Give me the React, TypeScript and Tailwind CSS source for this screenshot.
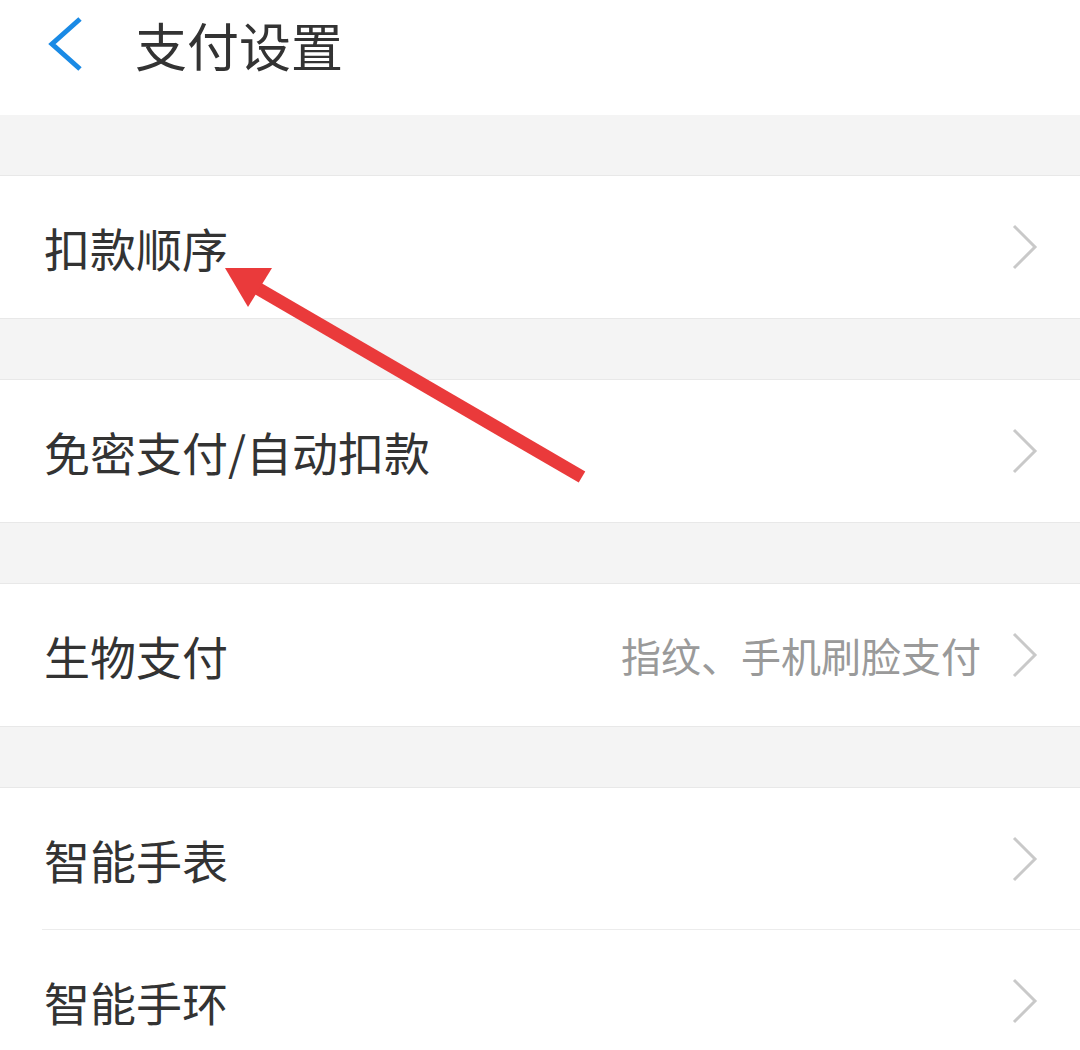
import React from "react";

const font = { fontFamily: '"Noto Sans CJK SC", "Noto Sans", sans-serif' };

function Chevron() {
  return (
    <svg width="28" height="46" viewBox="0 0 28 46" className="shrink-0">
      <path d="M3 2 L24 23 L3 44" fill="none" stroke="#c9c9c9" strokeWidth="3" />
    </svg>
  );
}

function Row({ label, hint, divider }: { label: string; hint?: string; divider?: boolean }) {
  return (
    <div className="relative flex items-center h-[142px] bg-white pl-[44px] pr-[41px]">
      <span className="flex-1 text-[46px] text-[#333333] leading-none">{label}</span>
      {hint && <span className="text-[40px] text-[#9a9a9a] leading-none mr-[30px]">{hint}</span>}
      <Chevron />
      {divider && <div className="absolute left-[42px] right-0 bottom-0 h-px bg-[#ececec]" />}
    </div>
  );
}

function Band({ first }: { first?: boolean }) {
  return (
    <div
      className={
        first
          ? "h-[61px] bg-[#f4f4f4] border-b border-[#e8e8e8]"
          : "h-[62px] bg-[#f4f4f4] border-y border-[#e8e8e8]"
      }
    />
  );
}

export default function App() {
  return (
    <div className="relative w-[1080px] h-[1050px] overflow-hidden bg-white" style={font}>
      <div className="h-[115px] flex items-start pt-[16px]">
        <svg width="40" height="56" viewBox="0 0 40 56" className="ml-[45px] mt-[0px]">
          <path d="M35 3 L7 28 L35 53" fill="none" stroke="#1a8ae5" strokeWidth="5" />
        </svg>
        <span className="ml-[50px] text-[52px] text-[#333333] leading-[58px]">支付设置</span>
      </div>
      <Band first />
      <Row label="扣款顺序" />
      <Band />
      <Row label="免密支付/自动扣款" />
      <Band />
      <Row label="生物支付" hint="指纹、手机刷脸支付" />
      <Band />
      <Row label="智能手表" divider />
      <Row label="智能手环" />

      <svg className="absolute left-0 top-0 pointer-events-none" width="1080" height="1050">
        <line x1="582" y1="477" x2="252" y2="285" stroke="#ea3a3b" strokeWidth="13" strokeLinecap="butt" />
        <polygon points="225,268 272,268 248,307" fill="#ea3a3b" />
      </svg>
    </div>
  );
}
